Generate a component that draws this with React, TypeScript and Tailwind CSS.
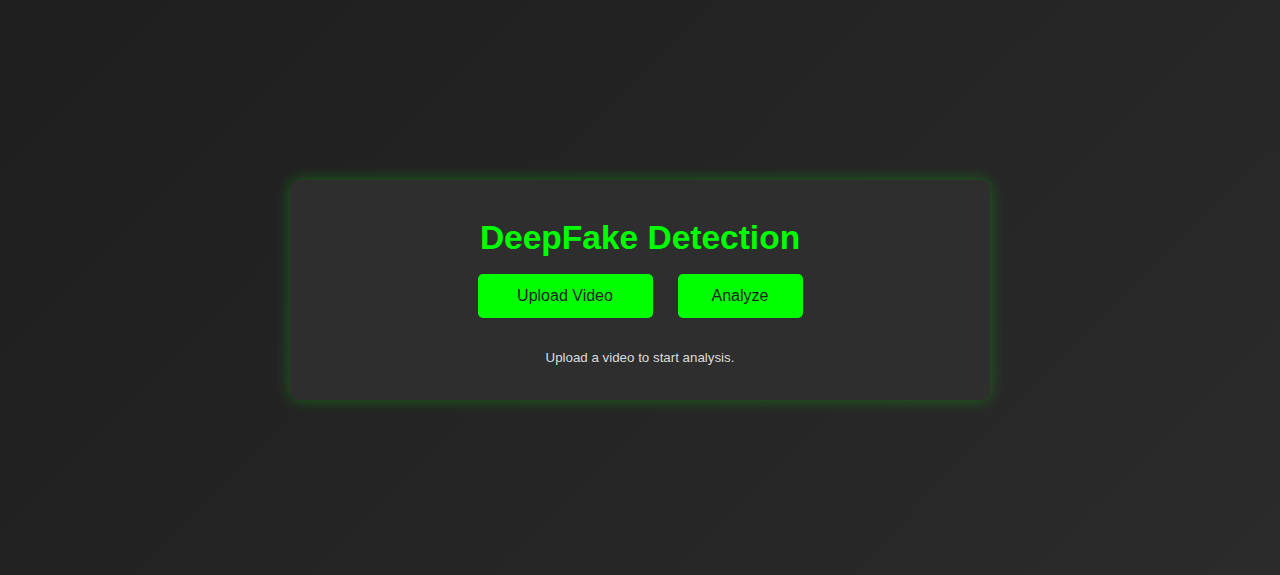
import { FC } from "react";

const App: FC = () => {
  return (
    <div
      className="w-full min-h-screen h-[575px] flex items-center justify-center pt-[5px] bg-[linear-gradient(135deg,#1e1e1e,#2b2b2b)]"
      style={{ fontFamily: '"Liberation Sans", Arial, sans-serif' }}
    >
      <div className="w-[700px] h-[220px] rounded-[10px] bg-[#2e2e2e] shadow-[0_0_15px_rgba(0,255,0,0.3)] flex flex-col items-center pt-[39px] box-border">
        <h1 className="text-[33.5px] leading-[38px] font-bold text-[#00ff00]">
          DeepFake Detection
        </h1>
        <div className="flex gap-[25px] mt-[17px]">
          <button className="w-[175px] h-[44px] rounded-[5px] bg-[#00ff00] text-[#1e1e1e] text-base">
            Upload Video
          </button>
          <button className="w-[125px] h-[44px] rounded-[5px] bg-[#00ff00] text-[#1e1e1e] text-base">
            Analyze
          </button>
        </div>
        <p className="mt-[32px] text-[13.33px] leading-4 text-[#dddddd]">
          Upload a video to start analysis.
        </p>
      </div>
    </div>
  );
};

export default App;
